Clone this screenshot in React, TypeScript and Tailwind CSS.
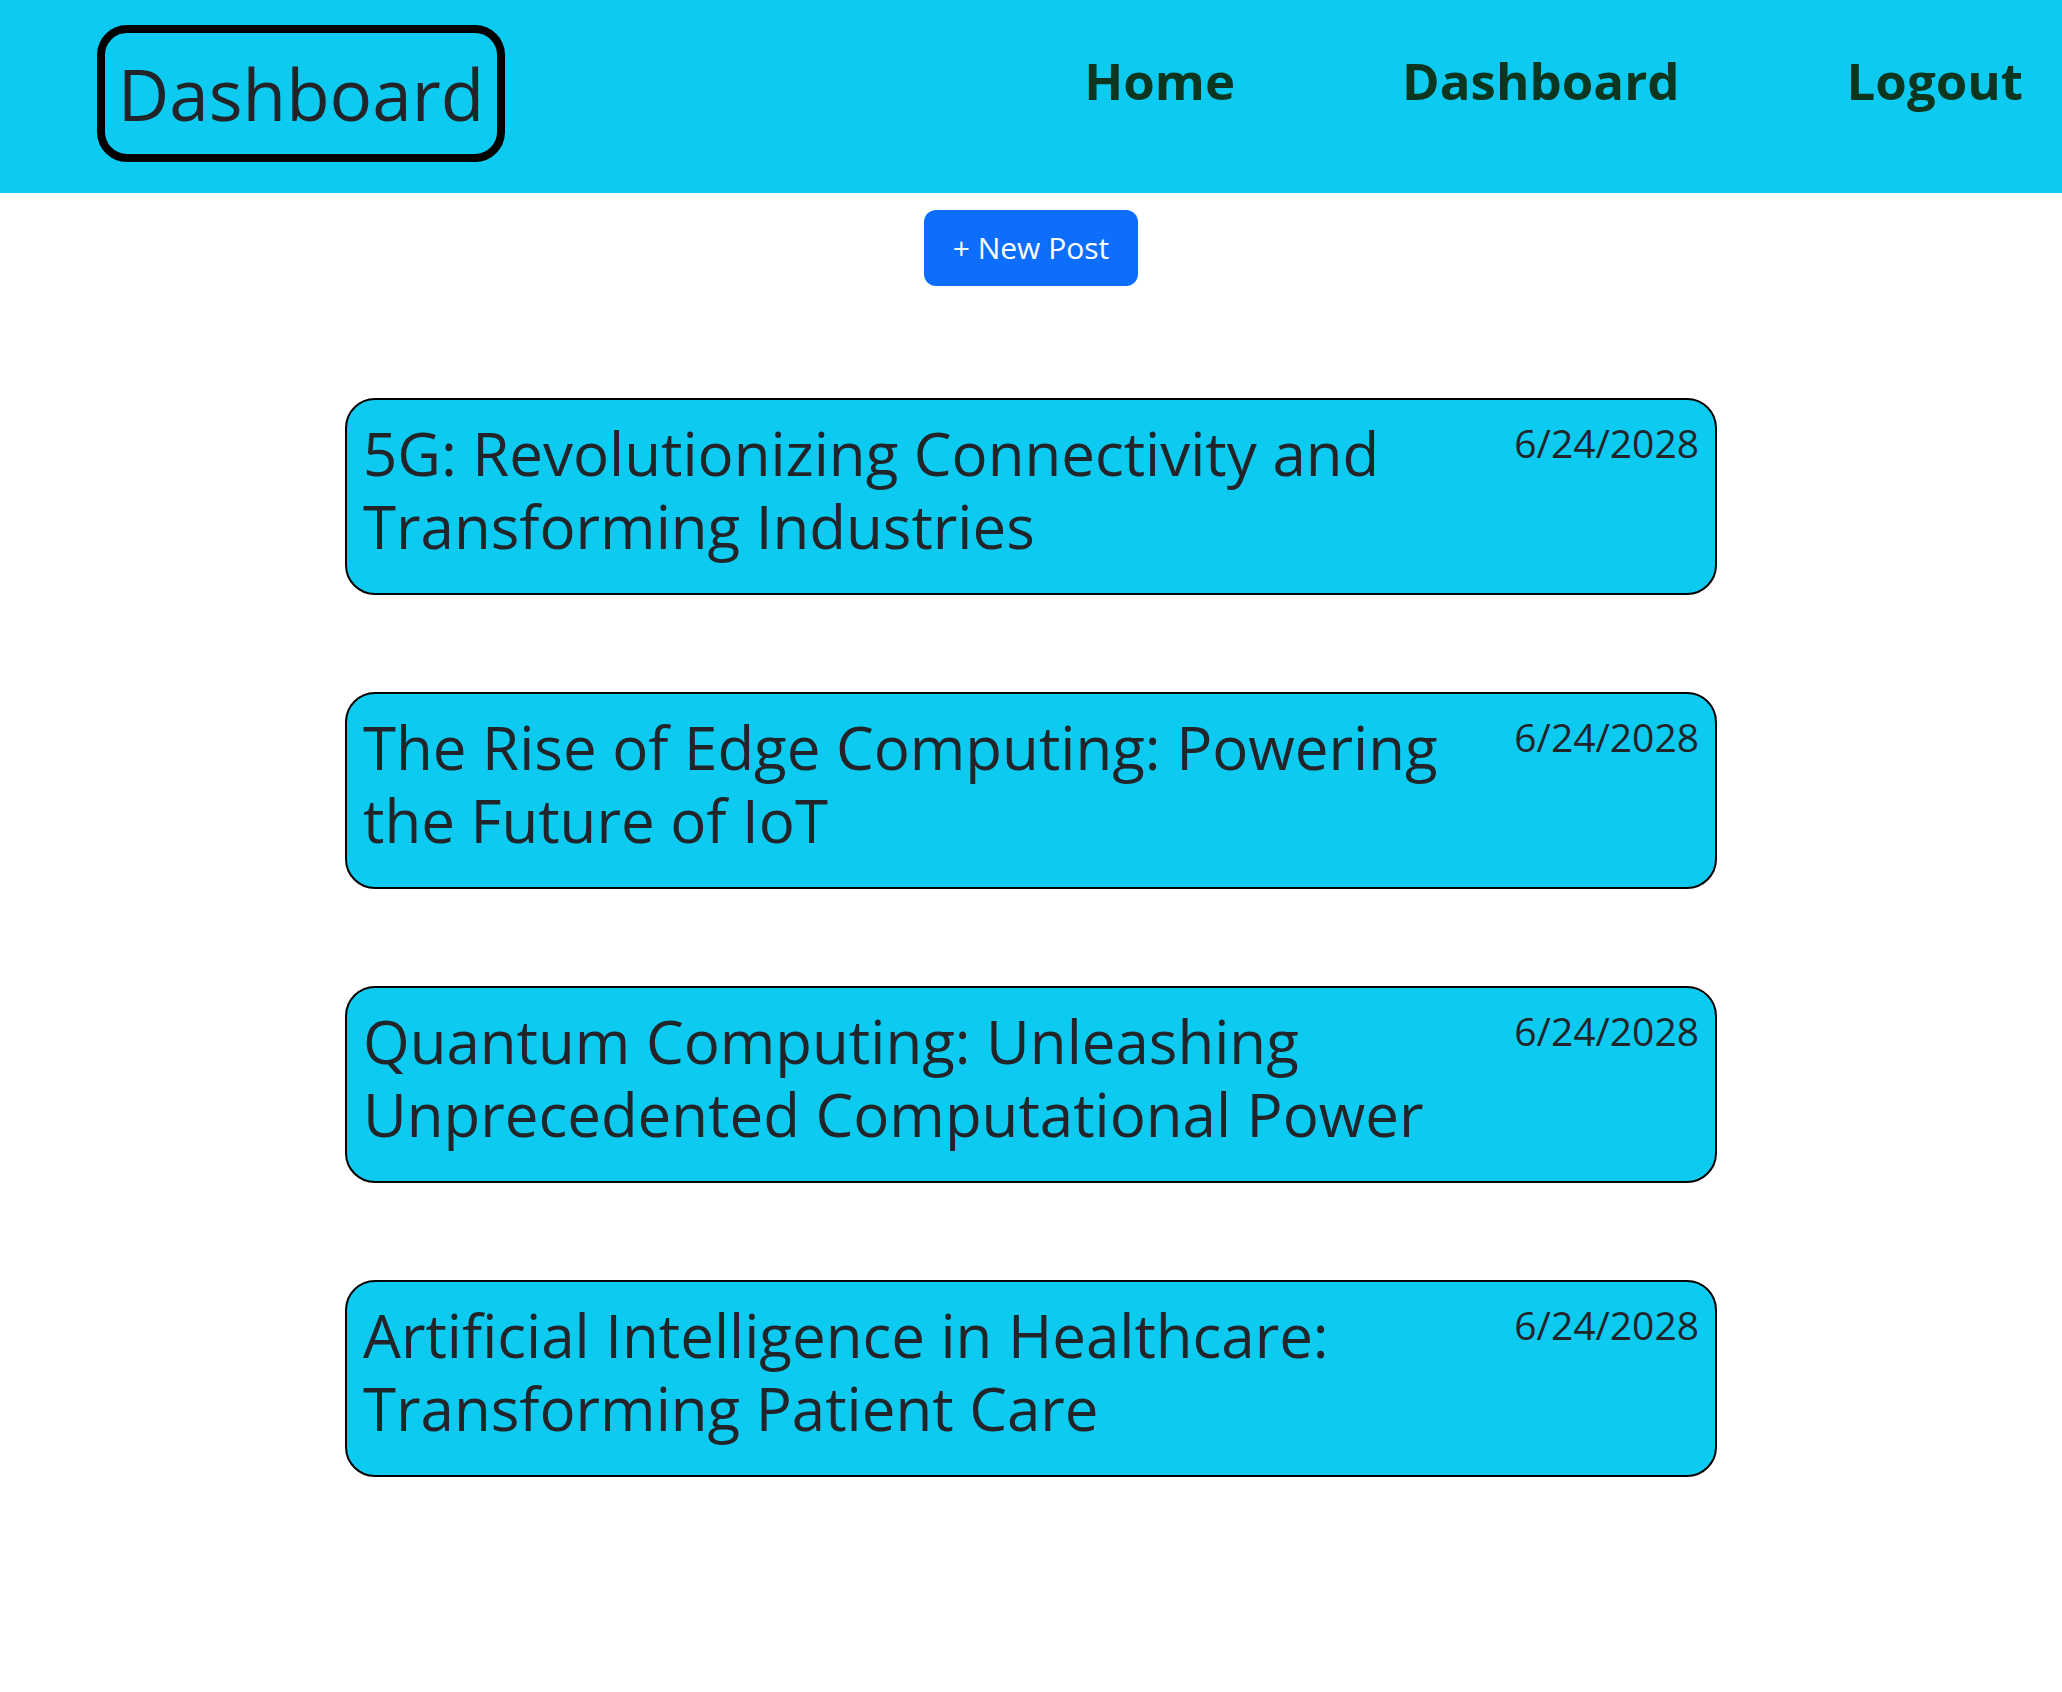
const posts = [
  { title: "5G: Revolutionizing Connectivity and Transforming Industries", date: "6/24/2028" },
  { title: "The Rise of Edge Computing: Powering the Future of IoT", date: "6/24/2028" },
  { title: "Quantum Computing: Unleashing Unprecedented Computational Power", date: "6/24/2028" },
  { title: "Artificial Intelligence in Healthcare: Transforming Patient Care", date: "6/24/2028" },
];

const navLinks = ["Home", "Dashboard", "Logout"];

function Header() {
  return (
    <header className="flex h-[193px] items-start justify-between bg-[#0dcaf0] pl-[97px] pr-[39px]">
      <a
        href="#"
        className="mt-[25px] flex h-[137px] w-[408px] items-center justify-center rounded-[30px] border-[8px] border-black text-[71px] leading-[84px] font-normal text-[#212529]"
      >
        Dashboard
      </a>
      <nav className="mt-[50px] flex items-center gap-[167px]">
        {navLinks.map((label) => (
          <a key={label} href="#" className="text-[51px] leading-[61px] font-bold text-[#0c3620]">
            {label}
          </a>
        ))}
      </nav>
    </header>
  );
}

function PostCard({ title, date }: { title: string; date: string }) {
  return (
    <div className="flex items-start justify-between gap-[24px] rounded-[30px] border-2 border-black bg-[#0dcaf0] pt-[17px] pb-[30px] px-[16px] text-[#212529]">
      <h2 className="text-[60px] leading-[73px] font-normal">{title}</h2>
      <span className="mt-[2px] shrink-0 text-[39px] leading-[47px] font-normal">{date}</span>
    </div>
  );
}

export default function App() {
  return (
    <div className="min-h-screen bg-white" style={{ fontFamily: '"Open Sans", "Noto Sans", sans-serif' }}>
      <Header />
      <main className="flex flex-col items-center">
        <button
          type="button"
          className="mt-[17px] flex h-[76px] w-[214px] items-center justify-center rounded-[12px] bg-[#0d6efd] text-[30px] leading-[48px] text-white"
        >
          + New Post
        </button>
        <div className="mt-[112px] flex w-[1372px] flex-col gap-[97px]">
          {posts.map((p) => (
            <PostCard key={p.title} {...p} />
          ))}
        </div>
      </main>
    </div>
  );
}
